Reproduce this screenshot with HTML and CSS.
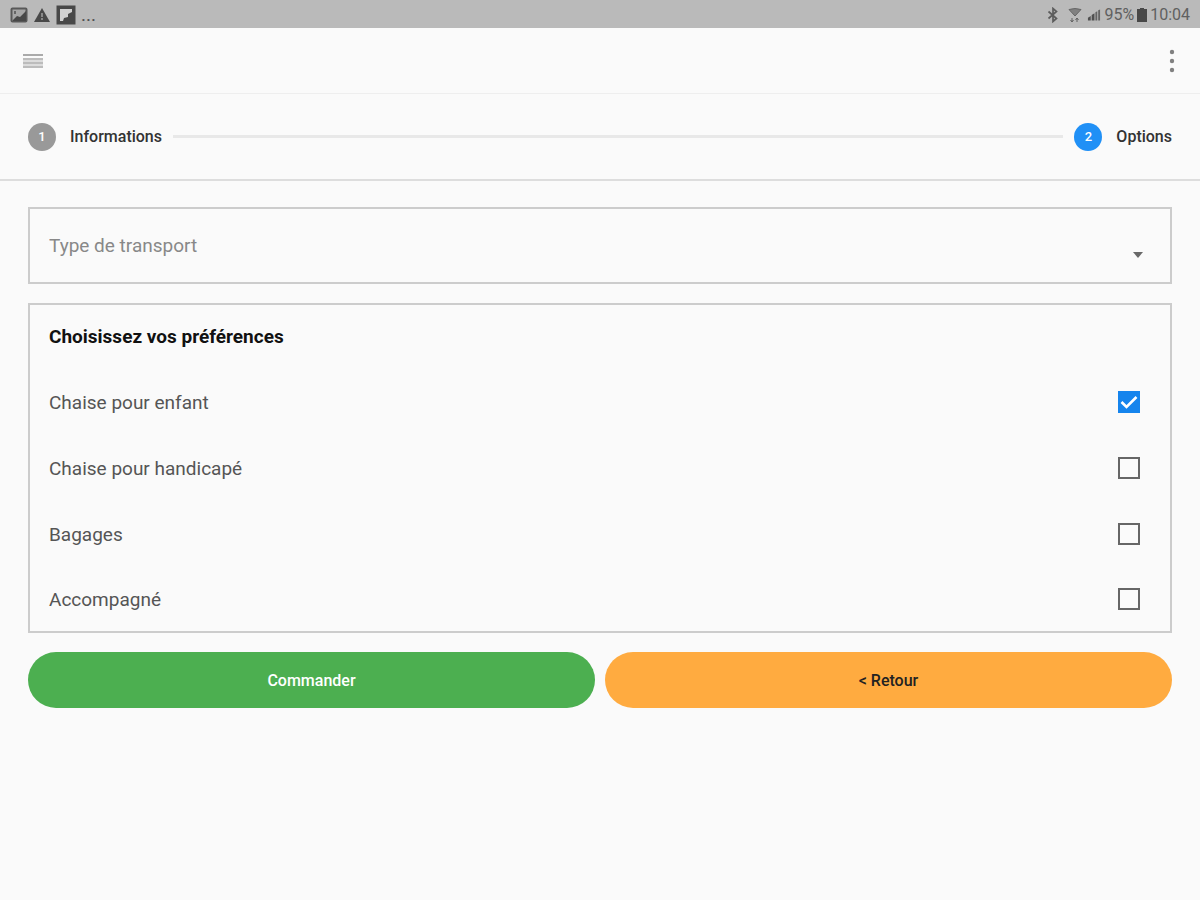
FILE: index.html
```html
<!DOCTYPE html>
<html lang="fr">
<head>
<meta charset="utf-8">
<meta name="viewport" content="width=device-width, initial-scale=1">
<title>Options</title>
<link rel="stylesheet" href="styles.css">
</head>
<body>
<div class="status">
  <div class="status-group">
    <svg width="18" height="16" viewBox="0 0 18 16" aria-hidden="true"><rect x="1.5" y="1.5" width="15" height="13" rx="1" fill="#a6a6a6" stroke="#585858" stroke-width="2"/><path d="M3 13l4-4 3 1 6-6v10H3z" fill="#484848"/><path d="M4 4h2v3H4z" fill="#666"/></svg>
    <svg width="18" height="16" viewBox="0 0 18 16" aria-hidden="true"><path d="M9 1l8 14H1z" fill="#484848"/><path d="M8 6h2v4H8zM8 11h2v2H8z" fill="#888"/></svg>
    <svg width="20" height="20" viewBox="0 0 20 20" aria-hidden="true"><rect x=".5" y=".5" width="19" height="19" fill="#484848"/><path d="M4 4h12v3l-4 2v3l-4 1-1 3H4z" fill="#d2d2d2"/></svg>
    <span class="more">...</span>
  </div>
  <div class="status-group">
    <svg class="bluetooth" width="12" height="16" viewBox="0 0 12 16" fill="none" stroke="#5c5c5c" stroke-width="1.7" aria-hidden="true"><path d="M1.500 4.500l8 7L6 14.500v-13l3.500 3-8 7"/></svg>
    <svg class="wifi" width="14" height="16" viewBox="0 0 14 16" fill="none" aria-hidden="true"><path d="M1 2.500q6-2 12 0L7 9z" fill="#808080" stroke="#666"/><path d="M4 11v4M2.500 13L4 15l1.500-2M9 15v-4M7.500 13L9 11l1.500 2" stroke="#606060"/></svg>
    <svg width="14" height="14" viewBox="0 0 15 14" aria-hidden="true"><path d="M1 13v-3l3-2v5zM5 13V7l3-2v8z" fill="#505050"/><path d="M9 13V4l2-1v10zM12 13V2l2-1v12z" fill="#646464"/></svg>
    <span>95%</span>
    <svg width="10" height="14" viewBox="0 0 10 14" aria-hidden="true"><path d="M3 0h4v1h3v13H0V1h3z" fill="#484848"/></svg>
    <span>10:04</span>
  </div>
</div>
<header class="toolbar">
  <button class="icon-button" type="button" aria-label="Menu"><svg width="20" height="16" viewBox="0 0 20 16" aria-hidden="true"><path d="M0 1h20v2H0z" fill="#aaa"/><path d="M0 5h20v10H0z" fill="#dcdcdc"/><path d="M0 5h20v2H0zM0 9h20v2H0zM0 13h20v2H0z" fill="#bcbcbc"/></svg></button>
  <button class="icon-button" type="button" aria-label="Plus"><svg width="6" height="24" viewBox="0 0 6 24" fill="#808080" aria-hidden="true"><circle cx="3" cy="3" r="2.200"/><circle cx="3" cy="12" r="2.200"/><circle cx="3" cy="21" r="2.200"/></svg></button>
</header>
<nav class="stepper" aria-label="Étapes">
  <div class="step"><span class="badge">1</span><span>Informations</span></div>
  <div class="line"></div>
  <div class="step" aria-current="step"><span class="badge active">2</span><span>Options</span></div>
</nav>
<main>
  <form class="form">
    <div class="select-box">
      <select class="select" aria-label="Type de transport"><option>Type de transport</option></select>
      <svg class="caret" width="12" height="6" viewBox="0 0 12 6" aria-hidden="true"><path d="M1 0h10L6 6z" fill="#686868"/></svg>
    </div>
    <section class="preferences">
      <h2 class="title">Choisissez vos préférences</h2>
      <label class="row"><span>Chaise pour enfant</span><input class="check" type="checkbox" checked></label>
      <label class="row"><span>Chaise pour handicapé</span><input class="check" type="checkbox"></label>
      <label class="row"><span>Bagages</span><input class="check" type="checkbox"></label>
      <label class="row"><span>Accompagné</span><input class="check" type="checkbox"></label>
    </section>
    <div class="actions">
      <button class="button order" type="button">Commander</button>
      <button class="button back" type="button">&lt; Retour</button>
    </div>
  </form>
</main>
</body>
</html>
```
FILE: styles.css
```css
* { box-sizing: border-box; }
body {
  margin: 0;
  background: #fafafa;
  color: #555;
  font-family: Roboto, "Liberation Sans", sans-serif;
  font-size: 19px;
}
.status {
  display: flex;
  justify-content: space-between;
  align-items: center;
  height: 28px;
  padding: 2px 10px 0;
  background: #bababa;
  color: #606060;
  font-size: 16px;
  line-height: 20px;
}
.status-group { display: flex; align-items: center; gap: 5px; }
.status-group:last-child { gap: 3px; }
.more { font-size: 19px; color: #505050; }
.bluetooth { margin-right: 6px; }
.wifi { margin-right: 2px; }
.toolbar {
  display: flex;
  justify-content: space-between;
  align-items: center;
  height: 66px;
  padding: 0 25px 0 23px;
  border-bottom: 1px solid #eee;
}
.icon-button {
  display: flex;
  padding: 0;
  border: 0;
  background: none;
}
.stepper {
  display: flex;
  align-items: center;
  gap: 11px;
  height: 87px;
  padding: 0 28px;
  border-bottom: 2px solid #ddd;
  color: #333;
  font-size: 16px;
  font-weight: 500;
}
.step { display: flex; align-items: center; gap: 14px; }
.badge {
  display: grid;
  place-items: center;
  width: 28px;
  height: 28px;
  border-radius: 50%;
  background: #999;
  color: #fff;
  font-size: 13px;
}
.active { background: #2090f6; }
.line { flex: 1; height: 3px; background: #e8e8e8; }
.form {
  display: flex;
  flex-direction: column;
  gap: 19px;
  padding: 26px 28px;
}
.select-box { position: relative; }
.select {
  display: block;
  width: 100%;
  height: 77px;
  padding: 0 60px 0 19px;
  border: 2px solid #ccc;
  border-radius: 0;
  appearance: none;
  background: transparent;
  color: #888;
  font: inherit;
}
.caret { position: absolute; right: 28px; bottom: 26px; pointer-events: none; }
.preferences {
  padding: 0 30px 0 19px;
  border: 2px solid #ccc;
}
.title {
  margin: 0;
  color: #111;
  font-size: 19px;
  font-weight: 700;
  line-height: 64px;
}
.row {
  display: flex;
  justify-content: space-between;
  align-items: center;
  height: 66px;
}
.row:last-child { height: 64px; }
.check {
  width: 22px;
  height: 22px;
  margin: 0;
  border: 2px solid #666;
  appearance: none;
}
.check:checked {
  border: 0;
  background: #1584ed url("data:image/svg+xml,%3Csvg xmlns='http://www.w3.org/2000/svg' viewBox='0 0 22 22'%3E%3Cpath d='M3.500 11l5 5L18.500 6' fill='none' stroke='white' stroke-width='2.600'/%3E%3C/svg%3E");
}
.actions { display: grid; grid-template-columns: 1fr 1fr; gap: 10px; }
.button {
  height: 56px;
  border: 0;
  border-radius: 28px;
  font: 500 16px Roboto, "Liberation Sans", sans-serif;
}
.order { background: #4caf50; color: #fff; }
.back { background: #ffab40; color: #222; }
```
